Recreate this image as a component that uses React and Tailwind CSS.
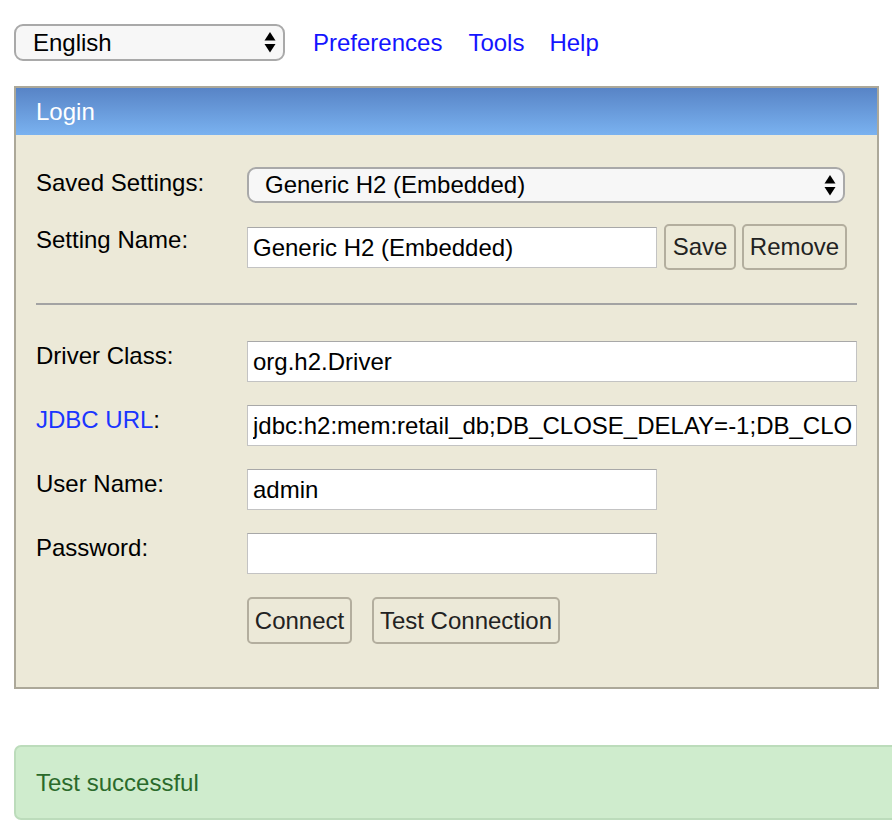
import React from "react";

function Arrows() {
  return (
    <svg width="12" height="21" viewBox="0 0 12 21" className="shrink-0">
      <path d="M6 0 L11.5 8.5 L0.5 8.5 Z" fill="#000" />
      <path d="M0.5 12 L11.5 12 L6 20.5 Z" fill="#000" />
    </svg>
  );
}

function FakeSelect({ text, className }) {
  return (
    <div
      className={
        "flex items-center justify-between rounded-[9px] border-2 border-[#a9a9a9] bg-[#f7f7f7] pr-[7px] text-black " +
        className
      }
    >
      <span className="whitespace-nowrap">{text}</span>
      <Arrows />
    </div>
  );
}

function TextBox({ value, className }) {
  return (
    <input
      readOnly
      value={value}
      className={
        "h-[41px] border border-[#c3c3c3] border-t-[#a8a8a8] bg-white pl-[5px] text-[24px] text-black outline-none " +
        className
      }
    />
  );
}

function Btn({ children, className }) {
  return (
    <div
      className={
        "flex items-center justify-center rounded-[5px] border-2 border-[#b3ae9e] bg-[#ece9d8] text-[#222] " +
        className
      }
    >
      {children}
    </div>
  );
}

function Label({ children, className }) {
  return (
    <div className={"w-[211px] shrink-0 leading-[28px] text-black " + (className || "")}>
      {children}
    </div>
  );
}

export default function App() {
  return (
    <div className="w-[892px] h-[832px] overflow-hidden bg-white font-['Liberation_Sans',Arial,sans-serif] text-[24px]">
      <div className="pl-[14px] pt-[24px]">
        {/* top bar */}
        <div className="flex items-center h-[37px]">
          <FakeSelect text="English" className="w-[271px] h-[37px] pl-[17px]" />
          <a className="ml-[28px] text-[#1414ff]">Preferences</a>
          <a className="ml-[26px] text-[#1414ff]">Tools</a>
          <a className="ml-[25px] text-[#1414ff]">Help</a>
        </div>

        {/* login panel */}
        <div className="mt-[25px] w-[865px] border-2 border-[#aca899] bg-[#ece9d8]">
          <div className="h-[47px] bg-linear-to-b from-[#5884c6] to-[#7ab2f0] pl-[20px] flex items-center text-white">
            Login
          </div>
          <div className="px-[20px] pt-[32px] pb-[43px]">
            <div className="flex items-start h-[36px]">
              <Label className="pt-[2px]">Saved Settings:</Label>
              <FakeSelect text="Generic H2 (Embedded)" className="w-[598px] h-[36px] pl-[16px]" />
            </div>
            <div className="flex items-start h-[46px] mt-[21px]">
              <Label className="pt-[2px]">Setting Name:</Label>
              <TextBox value="Generic H2 (Embedded)" className="w-[410px] mt-[3px]" />
              <Btn className="ml-[7px] w-[72px] h-[46px]">Save</Btn>
              <Btn className="ml-[6px] w-[105px] h-[46px]">Remove</Btn>
            </div>
            <div className="mt-[33px] h-[2px] bg-[#a3a3a3]" />
            <div className="mt-[36px] flex flex-col gap-[23px]">
              <div className="flex items-start">
                <Label className="pt-[1px]">Driver Class:</Label>
                <TextBox value="org.h2.Driver" className="flex-1" />
              </div>
              <div className="flex items-start">
                <Label className="pt-[1px]">
                  <a className="text-[#1a35ff]">JDBC URL</a>:
                </Label>
                <TextBox
                  value="jdbc:h2:mem:retail_db;DB_CLOSE_DELAY=-1;DB_CLOSE_ON_EXIT=FALSE"
                  className="flex-1 pr-[3px]"
                />
              </div>
              <div className="flex items-start">
                <Label className="pt-[1px]">User Name:</Label>
                <TextBox value="admin" className="w-[410px]" />
              </div>
              <div className="flex items-start">
                <Label className="pt-[1px]">Password:</Label>
                <TextBox value="" className="w-[410px]" />
              </div>
              <div className="flex items-start">
                <div className="w-[211px] shrink-0" />
                <Btn className="w-[105px] h-[47px]">Connect</Btn>
                <Btn className="ml-[20px] w-[188px] h-[47px]">Test Connection</Btn>
              </div>
            </div>
          </div>
        </div>

        {/* success */}
        <div className="mt-[56px] w-[900px] h-[75px] rounded-[7px] border-2 border-[#bcdcbb] bg-[#cfeccd] pl-[20px] flex items-center text-[#2b6a2b]">
          Test successful
        </div>
      </div>
    </div>
  );
}
